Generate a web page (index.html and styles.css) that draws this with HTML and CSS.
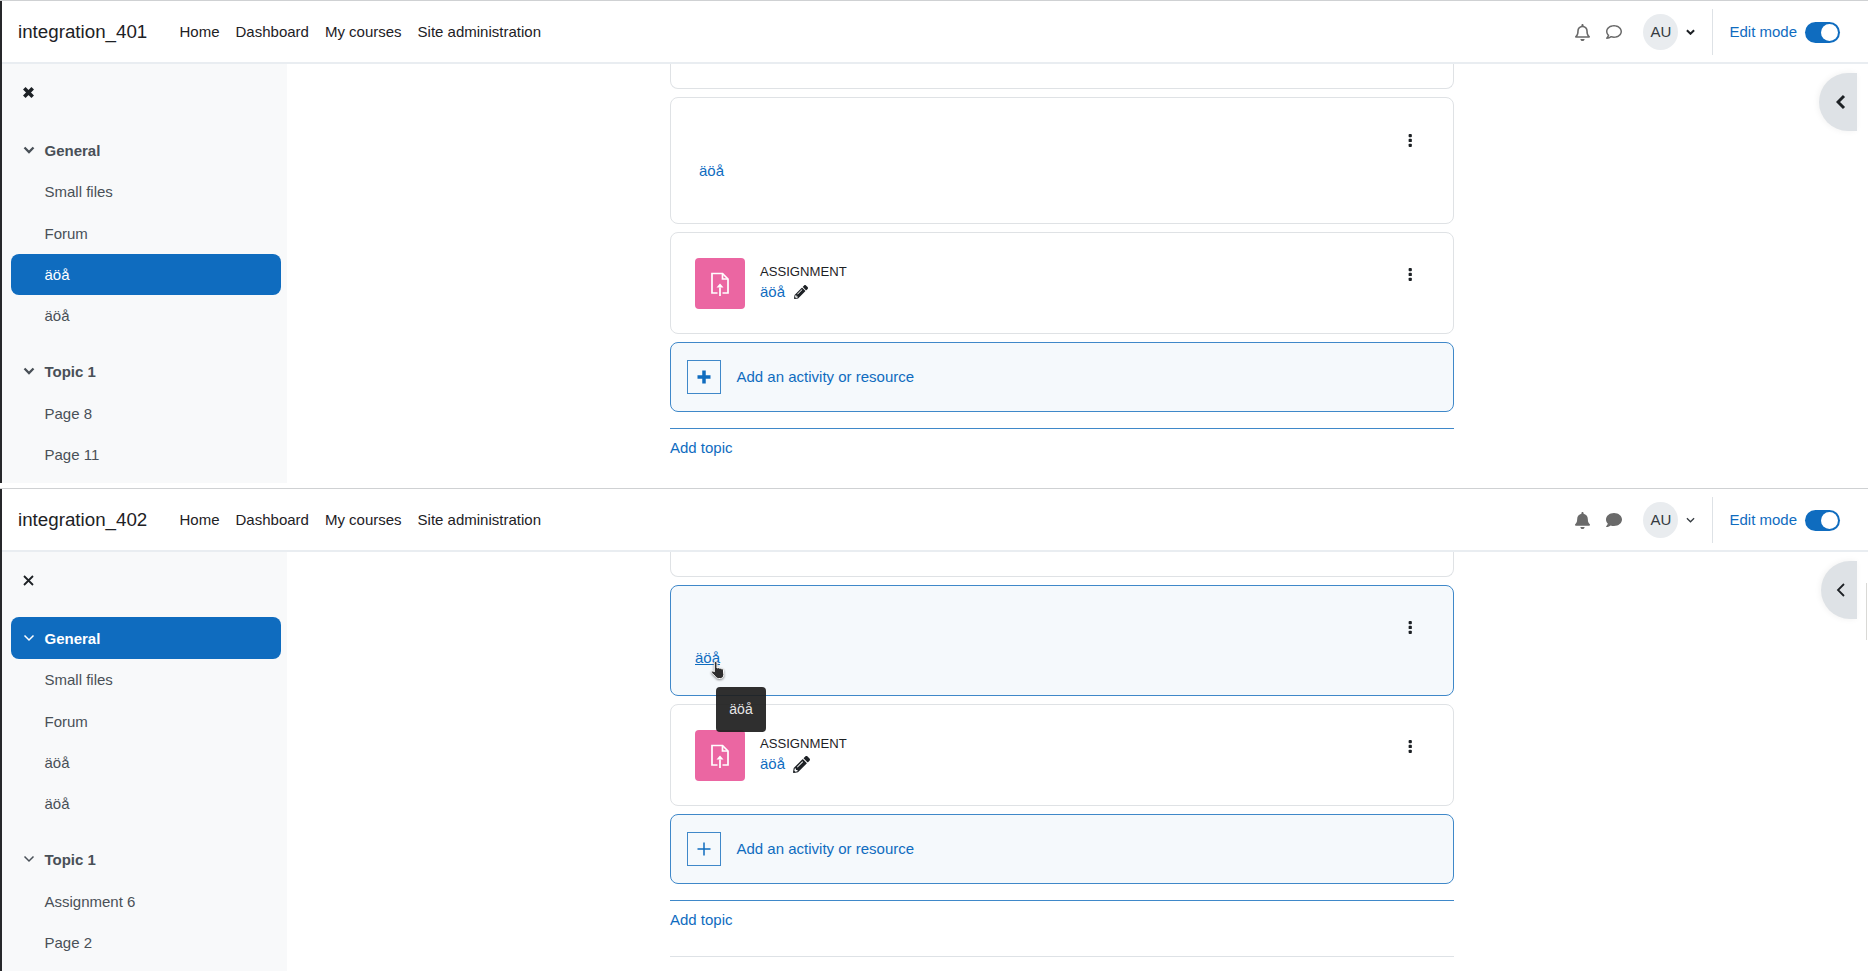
FILE: index.html
```html
<!DOCTYPE html>
<html lang="en">
<head>
<meta charset="utf-8">
<title>Moodle integration comparison</title>
<link rel="stylesheet" href="styles.css">
</head>
<body>
<svg class="defs" width="0" height="0" aria-hidden="true">
  <symbol id="bell-o" viewBox="0 0 448 512"><path d="M439.39 362.29c-19.32-20.76-55.47-51.99-55.47-154.29 0-77.7-54.48-139.9-127.94-155.16V32c0-17.67-14.32-32-31.98-32s-31.98 14.33-31.98 32v20.84C118.56 68.1 64.08 130.3 64.08 208c0 102.3-36.15 133.53-55.47 154.29-6 6.45-8.66 14.16-8.61 21.71.11 16.4 12.98 32 32.1 32h383.8c19.12 0 32-15.6 32.1-32 .05-7.55-2.61-15.27-8.61-21.71zM67.53 368c21.22-27.97 44.42-74.33 44.53-159.42 0-.2-.06-.38-.06-.58 0-61.86 50.14-112 112-112s112 50.14 112 112c0 .2-.06.38-.06.58.11 85.1 23.31 131.46 44.53 159.42H67.53zM224 512c35.32 0 63.96-28.65 63.96-64H160.04c0 35.35 28.64 64 63.96 64z"/></symbol>
  <symbol id="bell-s" viewBox="0 0 448 512"><path d="M224 512c35.32 0 63.97-28.65 63.97-64H160.03c0 35.35 28.65 64 63.97 64zm215.39-149.71c-19.32-20.76-55.47-51.99-55.47-154.29 0-77.7-54.48-139.9-127.94-155.16V32c0-17.67-14.32-32-31.98-32s-31.98 14.33-31.98 32v20.84C118.56 68.1 64.08 130.3 64.08 208c0 102.3-36.15 133.53-55.47 154.29-6 6.45-8.66 14.16-8.61 21.71.11 16.4 12.98 32 32.1 32h383.8c19.12 0 32-15.6 32.1-32 .05-7.55-2.61-15.27-8.61-21.71z"/></symbol>
  <symbol id="comment-o" viewBox="0 0 512 512"><path d="M256 32C114.6 32 0 125.1 0 240c0 47.6 19.9 91.2 52.9 126.3C38 405.7 7 439.1 6.5 439.5c-6.6 7-8.4 17.2-4.6 26S14.4 480 24 480c61.5 0 110-25.7 139.1-46.3C192 442.8 223.2 448 256 448c141.4 0 256-93.1 256-208S397.4 32 256 32zm0 368c-26.7 0-53.1-4.1-78.4-12.1l-22.7-7.2-19.5 13.8c-14.3 10.1-33.9 21.4-57.5 29 7.3-12.1 14.4-25.7 19.9-40.2l10.6-28.1-20.6-21.8C69.7 314.1 48 282.2 48 240c0-88.2 93.3-160 208-160s208 71.8 208 160-93.3 160-208 160z"/></symbol>
  <symbol id="comment-s" viewBox="0 0 512 512"><path d="M256 32C114.6 32 0 125.1 0 240c0 49.6 21.4 95 57 130.7C44.5 421.1 2.7 466 2.2 466.5c-2.2 2.3-2.8 5.7-1.5 8.7S4.8 480 8 480c66.3 0 116-31.8 140.6-51.4 32.7 12.3 69 19.4 107.4 19.4 141.4 0 256-93.1 256-208S397.4 32 256 32z"/></symbol>
  <symbol id="pencil" viewBox="0 0 512 512"><path d="M497.9 142.1l-46.1 46.1c-4.7 4.7-12.3 4.7-17 0l-111-111c-4.7-4.7-4.7-12.3 0-17l46.1-46.1c18.7-18.7 49.1-18.7 67.9 0l60.1 60.1c18.8 18.7 18.8 49.1 0 67.9zM284.2 99.8L21.6 362.4.4 483.9c-2.9 16.4 11.4 30.6 27.8 27.8l121.5-21.3 262.6-262.6c4.7-4.7 4.7-12.3 0-17l-111-111c-4.8-4.7-12.4-4.7-17.1 0zM124.1 339.9c-5.5-5.5-5.5-14.3 0-19.8l154-154c5.5-5.5 14.3-5.5 19.8 0s5.5 14.3 0 19.8l-154 154c-5.5 5.500-14.3 5.5-19.8 0zM88 424h48v36.3l-64.5 11.3-31.1-31.1L51.7 376H88v48z"/></symbol>
  <symbol id="assign" viewBox="0 0 24 24"><path class="assign-line" d="M9.500 21H4V1.500H14.500L20 7V21H14.500"/><path class="assign-line" d="M14.500 1.500V7H20M12 24V15.500"/><path class="assign-fill" d="M12 11.500l3.500 4h-7z"/></symbol>
  <symbol id="dots" viewBox="0 0 4 14"><rect x="0.500" y="0" width="3.500" height="3.500" rx="1"/><rect x="0.500" y="5.200" width="3.500" height="3.500" rx="1"/><rect x="0.500" y="10.400" width="3.500" height="3.500" rx="1"/></symbol>
</svg>

<section class="shot">
  <div class="window">
    <header class="topbar">
      <a class="brand">integration_401</a>
      <nav class="nav"><a>Home</a><a>Dashboard</a><a>My courses</a><a>Site administration</a></nav>
      <div class="tools">
        <svg class="i-bell"><use href="#bell-o"/></svg>
        <svg class="i-msg"><use href="#comment-o"/></svg>
        <span class="avatar">AU</span>
        <svg class="i-caret heavy" viewBox="0 0 10 6"><path d="M1 1l4 4 4-4"/></svg>
        <span class="divider"></span>
        <a class="edit">Edit mode</a>
        <span class="toggle"><span class="knob"></span></span>
      </div>
    </header>
    <div class="body">
      <aside class="side">
        <div class="close-row"><svg class="i-close heavy" viewBox="0 0 11 11"><path d="M1.300 1.300l8.400 8.400M9.700 1.300l-8.400 8.400"/></svg></div>
        <div class="row head"><svg class="i-chev heavy" viewBox="0 0 12 8"><path d="M1.500 1.500L6 6l4.500-4.500"/></svg>General</div>
        <div class="row">Small files</div>
        <div class="row">Forum</div>
        <div class="row active">äöå</div>
        <div class="row">äöå</div>
        <div class="row head topic"><svg class="i-chev heavy" viewBox="0 0 12 8"><path d="M1.500 1.500L6 6l4.500-4.500"/></svg>Topic 1</div>
        <div class="row">Page 8</div>
        <div class="row">Page 11</div>
      </aside>
      <main class="main">
        <div class="card stub"></div>
        <div class="card label-card">
          <a class="link label-text">äöå</a>
          <svg class="i-dots"><use href="#dots"/></svg>
        </div>
        <div class="card mod">
          <span class="mod-icon"><svg class="i-assign"><use href="#assign"/></svg></span>
          <div class="mod-text">
            <span class="mod-type">ASSIGNMENT</span>
            <span class="mod-name"><a class="link">äöå</a><svg class="i-pencil"><use href="#pencil"/></svg></span>
          </div>
          <svg class="i-dots dots-mod"><use href="#dots"/></svg>
        </div>
        <div class="add">
          <span class="plus-box"><svg class="i-plus heavy" viewBox="0 0 14 14"><path d="M7 .5v13M.5 7h13"/></svg></span>
          <span>Add an activity or resource</span>
        </div>
        <div class="add-topic"><a class="link">Add topic</a></div>
      </main>
      <button class="drawer heavy" aria-label="Open drawer"><svg viewBox="0 0 10 16"><path d="M8 2L2 8l6 6"/></svg></button>
    </div>
  </div>
</section>

<section class="shot">
  <div class="window">
    <header class="topbar">
      <a class="brand">integration_402</a>
      <nav class="nav"><a>Home</a><a>Dashboard</a><a>My courses</a><a>Site administration</a></nav>
      <div class="tools">
        <svg class="i-bell"><use href="#bell-s"/></svg>
        <svg class="i-msg"><use href="#comment-s"/></svg>
        <span class="avatar">AU</span>
        <svg class="i-caret" viewBox="0 0 10 6"><path d="M1 1l4 4 4-4"/></svg>
        <span class="divider"></span>
        <a class="edit">Edit mode</a>
        <span class="toggle"><span class="knob"></span></span>
      </div>
    </header>
    <div class="body">
      <aside class="side">
        <div class="close-row"><svg class="i-close" viewBox="0 0 11 11"><path d="M1 1l9 9M10 1l-9 9"/></svg></div>
        <div class="row head active"><svg class="i-chev" viewBox="0 0 12 8"><path d="M1.500 1.500L6 6l4.500-4.500"/></svg>General</div>
        <div class="row">Small files</div>
        <div class="row">Forum</div>
        <div class="row">äöå</div>
        <div class="row">äöå</div>
        <div class="row head topic"><svg class="i-chev" viewBox="0 0 12 8"><path d="M1.500 1.500L6 6l4.500-4.500"/></svg>Topic 1</div>
        <div class="row">Assignment 6</div>
        <div class="row">Page 2</div>
      </aside>
      <main class="main">
        <div class="card stub"></div>
        <div class="card label-card hover">
          <a class="link label-text">äöå</a>
          <svg class="i-dots"><use href="#dots"/></svg>
          <svg class="hand" viewBox="0 0 18 20"><path d="M5.500 1.500c1 0 1.500.7 1.500 1.700V8l1-.3c.8-.2 1.400 0 1.700.6.800-.3 1.600 0 1.800.6.800-.3 1.700 0 1.900.8l.4 5c0 2-1.200 3.800-3.300 3.800H8.500c-1.300 0-2.100-.7-2.900-1.700L2 13.200c-.6-.8-.5-1.600.1-2 .7-.5 1.400-.2 2 .4l.2.300V3.200c0-1 .4-1.700 1.200-1.700z"/></svg>
          <span class="tip">äöå</span>
        </div>
        <div class="card mod">
          <span class="mod-icon"><svg class="i-assign"><use href="#assign"/></svg></span>
          <div class="mod-text">
            <span class="mod-type">ASSIGNMENT</span>
            <span class="mod-name"><a class="link">äöå</a><svg class="i-pencil big"><use href="#pencil"/></svg></span>
          </div>
          <svg class="i-dots dots-mod"><use href="#dots"/></svg>
        </div>
        <div class="add">
          <span class="plus-box"><svg class="i-plus" viewBox="0 0 14 14"><path d="M7 .5v13M.5 7h13"/></svg></span>
          <span>Add an activity or resource</span>
        </div>
        <div class="add-topic"><a class="link">Add topic</a></div>
        <div class="rule"></div>
      </main>
      <button class="drawer narrow" aria-label="Open drawer"><svg viewBox="0 0 10 16"><path d="M8 2L2 8l6 6"/></svg></button>
      <span class="sliver"></span>
    </div>
  </div>
</section>
</body>
</html>
```

FILE: styles.css
```css
* { box-sizing: border-box; }
html, body { margin: 0; height: 100%; }
body {
  width: 1868px;
  height: 976px;
  overflow: hidden;
  background: #fff;
  color: #1d2125;
  font-family: "Liberation Sans", Arial, sans-serif;
  font-size: 15px;
  line-height: 1.5;
}
.defs { position: absolute; }
.shot {
  height: 488px;
  padding-bottom: 5px;
  border-top: 1px solid #cfd1d3;
  display: flex;
}
.window {
  flex: 1;
  min-width: 0;
  display: flex;
  flex-direction: column;
  border-left: 2px solid #26272a;
}
.topbar {
  height: 63px;
  flex: none;
  display: flex;
  align-items: center;
  border-bottom: 2px solid #e9edf1;
  padding: 1px 28px 0 16px;
}
.brand { font-size: 18.75px; line-height: 1; width: 131px; }
.nav { display: flex; margin-left: 22.5px; }
.nav a { padding: 0 8px; }
.tools { margin-left: auto; display: flex; align-items: center; }
.i-bell { width: 15px; height: 17px; fill: #6a6a6a; margin-right: 16px; }
.i-msg { width: 16px; height: 16px; fill: #6a6a6a; margin-right: 21px; }
.avatar {
  width: 35px;
  height: 36px;
  border-radius: 50%;
  background: #e9ecef;
  color: #343a40;
  display: flex;
  align-items: center;
  justify-content: center;
}
.i-caret { width: 9px; height: 6px; margin-left: 8px; fill: none; stroke: #343a40; stroke-width: 1.4; }
.i-caret.heavy { stroke: #1d2125; stroke-width: 2.2; }
.divider { width: 1px; height: 46px; background: #dee2e6; margin: 0 16px 0 17px; }
.edit { color: #0f6cbf; }
.toggle {
  width: 35px;
  height: 21px;
  margin: 1px 0 0 8px;
  border-radius: 11px;
  background: #0f6cbf;
  display: flex;
  justify-content: flex-end;
  align-items: center;
  padding-right: 2px;
}
.knob { width: 17px; height: 17px; border-radius: 50%; background: #fff; }

.body { flex: 1; min-height: 0; display: flex; position: relative; }
.side {
  width: 285px;
  flex: none;
  background: #f8f9fa;
  padding: 0 6px 0 9px;
  overflow: hidden;
}
.close-row { height: 65px; padding: 23px 0 0 12px; }
.i-close { display: block; width: 11px; height: 11px; fill: none; stroke: #1d2125; stroke-width: 1.800; }
.i-close.heavy { stroke-width: 3.600; }
.row {
  height: 41.33px;
  display: flex;
  align-items: center;
  padding: 2px 0 0 33.5px;
  color: #495057;
  border-radius: 8px;
}
.head { font-weight: 700; position: relative; height: 42px; }
.topic { margin-top: 14px; }
.i-chev { position: absolute; left: 12px; top: 17px; width: 12px; height: 8px; fill: none; stroke: currentColor; stroke-width: 1.500; }
.i-chev.heavy { stroke-width: 2.300; }
.active { background: #0f6cbf; color: #fff; }

.main {
  flex: 1;
  min-width: 0;
  overflow: hidden;
  padding-left: 383px;
  padding-right: 414px;
}
.card { border: 1px solid #dfe2e5; border-radius: 8px; margin-bottom: 8px; background: #fff; position: relative; }
.stub { height: 25px; border-top: 0; border-top-left-radius: 0; border-top-right-radius: 0; }
.label-card {
  height: 127px;
  display: flex;
  justify-content: space-between;
  align-items: flex-start;
  padding: 36px 41px 0 28px;
}
.label-text { padding-top: 27px; line-height: 19px; }
.link { color: #0f6cbf; }
.i-dots { width: 4px; height: 13px; fill: #1d2125; flex: none; }
.hover {
  height: 111px;
  background: #f5f9fc;
  border: 1px solid #3f88c9;
  padding: 35px 41px 0 24px;
}
.hover .label-text { text-decoration: underline; }
.hand {
  position: absolute;
  left: 38px;
  top: 74px;
  width: 20px;
  height: 20px;
  fill: #2f2f2f;
  stroke: #fff;
  stroke-width: 1;
  filter: drop-shadow(0 1px 1px rgba(0, 0, 0, 0.45));
}
.tip {
  position: absolute;
  left: 45px;
  top: 101px;
  width: 50px;
  height: 45px;
  border-radius: 4px;
  background: rgba(29, 29, 29, 0.92);
  color: #e6e6e6;
  font-size: 14px;
  display: flex;
  align-items: center;
  justify-content: center;
  z-index: 2;
}
.mod {
  height: 102px;
  display: flex;
  padding: 25px 41px 0 24px;
}
.mod-icon {
  width: 50px;
  height: 51px;
  background: #eb66a2;
  border-radius: 4px;
  display: flex;
  align-items: center;
  justify-content: center;
  flex: none;
}
.i-assign { width: 24px; height: 24px; display: block; }
.assign-line { fill: none; stroke: #fff; stroke-width: 1.700; }
.assign-fill { fill: #fff; }
.mod-text { margin-left: 15px; display: flex; flex-direction: column; flex: 1; }
.mod-type { font-size: 13.125px; line-height: 19px; margin-top: 4px; }
.mod-name { display: flex; align-items: center; line-height: 22px; }
.i-pencil { width: 14px; height: 14px; margin-left: 9px; fill: #1d2125; }
.i-pencil.big { width: 17px; height: 17px; margin-left: 8px; }
.dots-mod { margin-top: 10px; }
.add {
  height: 70px;
  display: flex;
  align-items: center;
  padding-left: 16px;
  border: 1px solid #3f88c9;
  border-radius: 8px;
  background: #f5f9fc;
  color: #0f6cbf;
}
.plus-box {
  width: 34px;
  height: 34px;
  border: 1px solid #3f88c9;
  margin-right: 15.5px;
  display: flex;
  align-items: center;
  justify-content: center;
  flex: none;
}
.i-plus { width: 14px; height: 14px; fill: none; stroke: #0f6cbf; stroke-width: 1.500; }
.i-plus.heavy { stroke-width: 3.500; }
.add-topic {
  margin-top: 16px;
  border-top: 1px solid #3f88c9;
  padding-top: 8px;
}
.rule { height: 1px; background: #dee2e6; margin-top: 24px; }
.drawer {
  position: absolute;
  right: 11px;
  top: 9px;
  width: 38px;
  height: 58px;
  padding: 0 0 0 6px;
  border: 0;
  border-radius: 29px 0 0 29px;
  background: #dee2e6;
  box-shadow: -1px 0 6px rgba(0, 0, 0, 0.06);
  display: flex;
  align-items: center;
  justify-content: center;
}
.drawer svg { width: 10px; height: 16px; fill: none; stroke: #1d2125; stroke-width: 1.800; }
.drawer.heavy svg { stroke-width: 3; }
.drawer.narrow { width: 36px; padding-left: 4px; }
.sliver {
  position: absolute;
  right: 1px;
  top: 31px;
  width: 1px;
  height: 57px;
  background: #d9d9d6;
}
```
